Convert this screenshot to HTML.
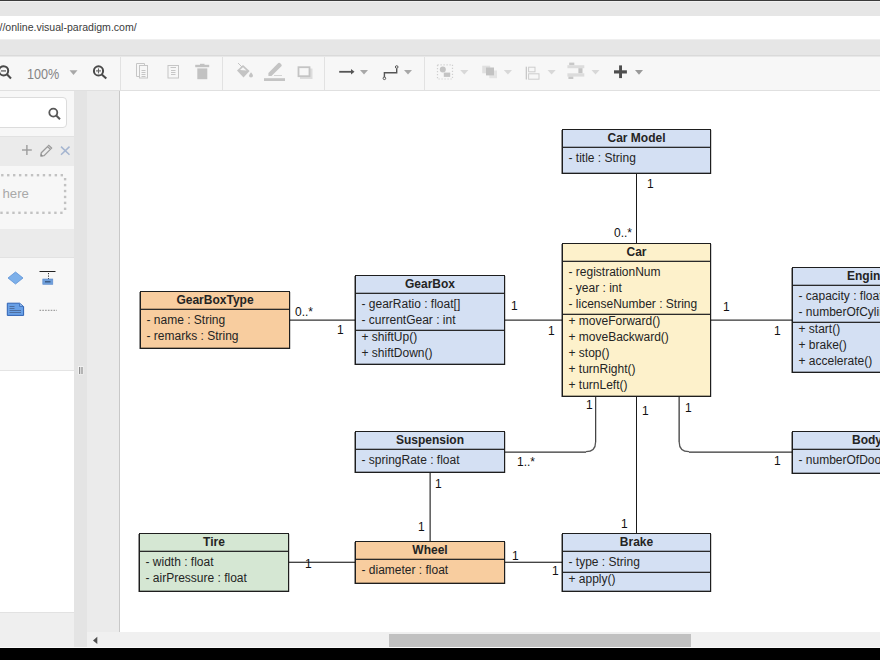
<!DOCTYPE html>
<html><head><meta charset="utf-8">
<style>
html,body{margin:0;padding:0;}
body{width:880px;height:660px;overflow:hidden;position:relative;background:#fff;font-family:"Liberation Sans",sans-serif;}
.a{position:absolute;}
</style></head><body>
<div class="a" style="left:0;top:0;width:880px;height:1px;background:#3a3a3a"></div>
<div class="a" style="left:0;top:1px;width:880px;height:1px;background:#f0f0f0"></div>
<div class="a" style="left:0;top:2px;width:880px;height:14px;background:#e6e6e6"></div>
<div class="a" style="left:0;top:16px;width:880px;height:23px;background:#fff"></div>
<div class="a" style="left:-0.5px;top:19px;font-size:10.55px;line-height:16px;color:#3c3c3c;white-space:nowrap">//online.visual-paradigm.com/</div>
<div class="a" style="left:0;top:39px;width:880px;height:1px;background:#efefef"></div>
<div class="a" style="left:0;top:40px;width:880px;height:15px;background:#e6e6e6"></div>
<div class="a" style="left:0;top:55px;width:880px;height:1px;background:#dadada"></div>
<div class="a" style="left:0;top:56px;width:880px;height:1px;background:#e8e8e8"></div>
<div class="a" style="left:0;top:57px;width:880px;height:33px;background:#f7f7f7"></div>
<div class="a" style="left:0;top:90px;width:880px;height:1px;background:#e0e0e0"></div>
<div class="a" style="left:27px;top:65.5px;font-size:14.5px;line-height:16px;color:#858585;white-space:nowrap;transform:scaleX(0.87);transform-origin:0 0">100%</div>
<svg class="a" style="left:0;top:57px" width="880" height="34" viewBox="0 57 880 34">
 <g fill="none" stroke="#e2e2e2" stroke-width="1">
  <line x1="120.5" y1="57" x2="120.5" y2="90"/><line x1="222.5" y1="57" x2="222.5" y2="90"/>
  <line x1="324.5" y1="57" x2="324.5" y2="90"/><line x1="424.5" y1="57" x2="424.5" y2="90"/>
 </g>
 <!-- zoom out -->
 <g fill="none" stroke="#4a4a4a" stroke-width="1.8">
  <circle cx="3.6" cy="70.8" r="4.6" stroke-width="2"/><line x1="6.9" y1="74.2" x2="11" y2="78.5" stroke-width="2"/>
  <line x1="1" y1="70.9" x2="6" y2="70.9" stroke-width="1.8" stroke="#8a8a8a"/>
  <circle cx="98.5" cy="70.9" r="4.6" stroke-width="2"/><line x1="101.8" y1="74.4" x2="106.3" y2="78.6" stroke-width="2"/>
  <line x1="96" y1="70.9" x2="101" y2="70.9" stroke-width="1.1" stroke="#666"/><line x1="98.5" y1="68.4" x2="98.5" y2="73.4" stroke-width="1.1" stroke="#666"/>
 </g>
 <path d="M69.5 70.3 H77.5 L73.5 75 Z" fill="#a8a8a8"/>
 <!-- copy -->
 <g fill="none" stroke="#c6c6c6" stroke-width="1">
  <path d="M139.5 76.5 H136.5 V63.5 H144.5 V65.5"/>
  <rect x="139.5" y="65.5" width="8" height="12.5"/>
  <path d="M141.5 70.5 H145.5 M141.5 72.5 H145.5 M141.5 74.5 H145.5 M141.5 76.5 H145.5"/>
  <rect x="168" y="65.5" width="10.5" height="12.5"/>
  <path d="M170.5 67.5 H176 M171 70.5 H175.5 M171 72.5 H175.5 M171 74.5 H175.5"/>
 </g>
 <g fill="#c2c2c2">
  <rect x="195.2" y="64.8" width="14" height="2.4"/><rect x="200" y="63.8" width="4.5" height="1.5"/>
  <rect x="197.3" y="68.4" width="10" height="10.8"/>
 </g>
 <!-- fill bucket -->
 <g fill="#c4c4c4">
  <path d="M237 70.5 L243 65 L249.6 71 L243.5 77.4 Z"/>
  <path d="M251 72.3 Q253.2 75 253 75.5 A2 2 0 0 1 249 75.5 Q249 75 251 72.3Z"/>
 </g>
 <path d="M238 63 L244 69" stroke="#c4c4c4" stroke-width="1"/>
 <path d="M240 70 L243 67.3 L246.5 70.5 Z" fill="#f7f7f7"/>
 <!-- pencil -->
 <path d="M268.4 73 L278.3 63.1 A1.2 1.2 0 0 1 280 63.1 L281.4 64.5 A1.2 1.2 0 0 1 281.4 66.2 L271.5 76 L268.4 76 Z" fill="#c4c4c4"/>
 <rect x="274" y="75" width="8" height="1" fill="#d4d4d4"/>
 <rect x="264" y="78.2" width="21" height="2.8" fill="#c4c4c4"/>
 <!-- shadow box -->
 <rect x="300" y="68.5" width="12.5" height="10.5" fill="#dddddd"/>
 <rect x="298.5" y="67.2" width="11" height="9" fill="#f7f7f7" stroke="#c4c4c4" stroke-width="1.8"/>
 <!-- arrow -->
 <path d="M339.2 71.8 H351.5" stroke="#555" stroke-width="1.8"/>
 <path d="M351 69 L354.5 71.8 L351 74.6 Z" fill="#555"/>
 <path d="M360 70 H368 L364 74.6 Z" fill="#a8a8a8"/>
 <!-- connector -->
 <path d="M384.4 77.2 V72.8 H396.7 V68.5" fill="none" stroke="#555" stroke-width="1.4"/>
 <circle cx="384.4" cy="78.3" r="1.3" fill="none" stroke="#555" stroke-width="1"/>
 <circle cx="396.7" cy="67" r="1.3" fill="none" stroke="#555" stroke-width="1"/>
 <path d="M404 70 H412 L408 74.6 Z" fill="#a8a8a8"/>
 <!-- group -->
 <rect x="437.5" y="64.8" width="15" height="14.2" fill="none" stroke="#d0d0d0" stroke-width="1.2" stroke-dasharray="1.2 1.8"/>
 <circle cx="442.8" cy="69.6" r="3" fill="#c4c4c4"/>
 <rect x="443.8" y="72.6" width="6.4" height="4.3" fill="#c4c4c4"/>
 <path d="M460.2 70 H468.4 L464.3 74.6 Z" fill="#d8d8d8"/>
 <!-- front/back -->
 <rect x="482.2" y="65.7" width="8" height="7.6" fill="#e0e0e0"/>
 <rect x="489.3" y="70.5" width="7.7" height="7.7" fill="#e4e4e4"/>
 <rect x="486" y="67.5" width="8" height="7.9" fill="#c2c2c2"/>
 <path d="M503.8 70 H512 L507.9 74.6 Z" fill="#d8d8d8"/>
 <!-- align -->
 <rect x="525.7" y="66.7" width="1.3" height="12.8" fill="#c8c8c8"/>
 <rect x="528.6" y="67.2" width="6.4" height="4.6" fill="none" stroke="#cdcdcd" stroke-width="1"/>
 <rect x="528.6" y="73.8" width="10.4" height="5.4" fill="none" stroke="#cdcdcd" stroke-width="1"/>
 <path d="M547.5 70 H555.7 L551.6 74.6 Z" fill="#d8d8d8"/>
 <!-- distribute -->
 <rect x="569.2" y="62.6" width="5.1" height="2.6" fill="#c8c8c8"/>
 <rect x="567.4" y="65.2" width="16.9" height="3" fill="#dcdcdc"/>
 <rect x="578.4" y="68.2" width="4.1" height="5.1" fill="#c4c4c4"/>
 <rect x="567.4" y="73.3" width="16.9" height="3.3" fill="#dcdcdc"/>
 <rect x="568.4" y="76.6" width="4.9" height="2.4" fill="#c8c8c8"/>
 <path d="M591.5 70 H599.5 L595.5 74.6 Z" fill="#d8d8d8"/>
 <!-- plus -->
 <rect x="614" y="70.3" width="12.9" height="3.2" fill="#4e4e4e"/>
 <rect x="619.1" y="65.4" width="2.9" height="12.7" fill="#4e4e4e"/>
 <path d="M635 70.1 H643 L639 74.7 Z" fill="#9a9a9a"/>
</svg>

<!-- left sidebar -->
<div class="a" style="left:0;top:91px;width:74px;height:45px;background:#f7f7f7"></div>
<div class="a" style="left:-10px;top:97px;width:75px;height:29px;background:#fff;border:1px solid #dcdcdc;border-radius:4px"></div>
<div class="a" style="left:0;top:136px;width:74px;height:30px;background:#ebebeb;border-top:1px solid #e2e2e2;box-sizing:border-box"></div>
<div class="a" style="left:0;top:166px;width:74px;height:63px;background:#f7f7f7"></div>
<div class="a" style="left:0;top:229px;width:74px;height:29px;background:#ebebeb"></div>
<div class="a" style="left:0;top:257px;width:74px;height:1px;background:#e2e2e2"></div>
<div class="a" style="left:0;top:258px;width:74px;height:112px;background:#f7f7f7"></div>
<div class="a" style="left:0;top:370px;width:74px;height:1px;background:#e4e4e4"></div>
<div class="a" style="left:0;top:371px;width:74px;height:241px;background:#fff"></div>
<div class="a" style="left:0;top:612px;width:74px;height:1px;background:#e2e2e2"></div>
<div class="a" style="left:0;top:613px;width:74px;height:34px;background:#efefef"></div>
<div class="a" style="left:74px;top:91px;width:13px;height:556px;background:#e4e4e4"></div>
<div class="a" style="left:87px;top:91px;width:32px;height:541px;background:#ebebeb"></div>
<div class="a" style="left:119px;top:91px;width:1px;height:541px;background:#c8c8c8"></div>
<div class="a" style="left:2.5px;top:186px;font-size:13.2px;line-height:16px;color:#a9a9a9;white-space:nowrap">here</div>
<svg class="a" style="left:0;top:91px" width="120" height="560" viewBox="0 91 120 560">
 <g fill="none" stroke="#585858" stroke-width="1.8">
  <circle cx="53.3" cy="112.6" r="4"/><line x1="56.2" y1="115.5" x2="60" y2="119.3" stroke-width="2"/>
 </g>
 <g stroke="#9c9c9c" stroke-width="1.4" fill="none">
  <line x1="22" y1="150" x2="31.8" y2="150"/><line x1="26.9" y1="145" x2="26.9" y2="155"/>
 </g>
 <path d="M41.3 152.8 L48.8 145.3 L51.6 148.1 L44.1 155.6 L41 155.8 Z M47.6 146.6 L50.3 149.3" fill="none" stroke="#9a9a9a" stroke-width="1.3"/><path d="M40.6 153.6 L43.2 156.2 L40.6 156.4 Z" fill="#8a8a8a"/>
 <g stroke="#a5b5d0" stroke-width="1.5"><line x1="61" y1="146.6" x2="69.5" y2="154.8"/><line x1="69.5" y1="146.6" x2="61" y2="154.8"/></g>
 <g fill="#c2c2c2"><rect x="1.10" y="174.00" width="2.4" height="2.4"/><rect x="0.30" y="211.60" width="2.4" height="2.4"/><rect x="7.05" y="174.00" width="2.4" height="2.4"/><rect x="6.29" y="211.60" width="2.4" height="2.4"/><rect x="13.00" y="174.00" width="2.4" height="2.4"/><rect x="12.28" y="211.60" width="2.4" height="2.4"/><rect x="18.95" y="174.00" width="2.4" height="2.4"/><rect x="18.27" y="211.60" width="2.4" height="2.4"/><rect x="24.90" y="174.00" width="2.4" height="2.4"/><rect x="24.26" y="211.60" width="2.4" height="2.4"/><rect x="30.85" y="174.00" width="2.4" height="2.4"/><rect x="30.25" y="211.60" width="2.4" height="2.4"/><rect x="36.80" y="174.00" width="2.4" height="2.4"/><rect x="36.24" y="211.60" width="2.4" height="2.4"/><rect x="42.75" y="174.00" width="2.4" height="2.4"/><rect x="42.23" y="211.60" width="2.4" height="2.4"/><rect x="48.70" y="174.00" width="2.4" height="2.4"/><rect x="48.22" y="211.60" width="2.4" height="2.4"/><rect x="54.65" y="174.00" width="2.4" height="2.4"/><rect x="54.21" y="211.60" width="2.4" height="2.4"/><rect x="60.60" y="174.00" width="2.4" height="2.4"/><rect x="60.20" y="211.60" width="2.4" height="2.4"/><rect x="63.90" y="178.00" width="2.4" height="2.4"/><rect x="63.90" y="183.92" width="2.4" height="2.4"/><rect x="63.90" y="189.84" width="2.4" height="2.4"/><rect x="63.90" y="195.76" width="2.4" height="2.4"/><rect x="63.90" y="201.68" width="2.4" height="2.4"/><rect x="63.90" y="207.60" width="2.4" height="2.4"/></g>
 <!-- shapes -->
 <path d="M8 278 L15.5 272 L23 278 L15.5 284 Z" fill="#7db0ea" stroke="#5d92d6" stroke-width="0.8"/>
 <line x1="39.5" y1="271.5" x2="55.5" y2="271.5" stroke="#222" stroke-width="1"/>
 <line x1="48.5" y1="273" x2="48.5" y2="279" stroke="#333" stroke-width="1" stroke-dasharray="1.2 1.3"/>
 <rect x="42.8" y="279" width="10" height="5.3" fill="#6f9fdb" stroke="#5a8ace" stroke-width="0.6"/>
 <rect x="45" y="281" width="5.5" height="1.5" fill="#3f5f8a"/>
 <path d="M7.3 303.2 H19.6 L23.6 306.6 V315.4 H7.3 Z" fill="#69a0e6" stroke="#2f62b3" stroke-width="1"/><path d="M19.6 303.6 V306.4 H23.2" fill="#9cc2f0" stroke="#2f62b3" stroke-width="0.8"/>
 <path d="M9.5 306.5 H14.5 M9.5 308.5 H14.5 M9.5 310.5 H21 M9.5 312.5 H21" stroke="#4a6a98" stroke-width="0.9"/>
 <line x1="39.5" y1="310.3" x2="57" y2="310.3" stroke="#8a8a8a" stroke-width="1" stroke-dasharray="1.6 1.2"/>
 <!-- handle -->
 <rect x="78" y="366" width="5.5" height="8.5" fill="#f2f2f2"/>
 <rect x="79.2" y="367" width="1" height="7" fill="#777"/><rect x="81.5" y="367" width="1" height="7" fill="#777"/>
 <!-- scroll arrow -->
 <path d="M97.3 636.7 L93 640.4 L97.3 644.1 Z" fill="#505050"/>
</svg>
<!-- scrollbar -->
<div class="a" style="left:87px;top:632px;width:793px;height:15px;background:#f0f0f0"></div>
<svg class="a" style="left:87px;top:632px" width="20" height="15" viewBox="87 632 20 15"><path d="M97.3 636.7 L93 640.4 L97.3 644.1 Z" fill="#505050"/></svg>
<div class="a" style="left:389px;top:634px;width:302px;height:13px;background:#c1c1c1"></div>
<div class="a" style="left:0;top:647px;width:880px;height:1px;background:#fafafa"></div>
<div class="a" style="left:0;top:648px;width:880px;height:12px;background:#000"></div>

<svg class="a" style="left:0;top:0" width="880" height="660" viewBox="0 0 880 660" font-family="Liberation Sans" font-size="12" fill="#242424">
<rect x="636" y="173" width="1" height="70" fill="#1a1a1a"/>
<rect x="636" y="396" width="1" height="137" fill="#1a1a1a"/>
<rect x="290" y="319" width="65" height="1" fill="#9a9a9a"/><rect x="290" y="320" width="65" height="1" fill="#666"/>
<rect x="505" y="319" width="57" height="1" fill="#9a9a9a"/><rect x="505" y="320" width="57" height="1" fill="#666"/>
<rect x="711" y="319" width="81" height="1" fill="#9a9a9a"/><rect x="711" y="320" width="81" height="1" fill="#666"/>
<rect x="429" y="473" width="1" height="68" fill="#9a9a9a"/>
<rect x="430" y="473" width="1" height="68" fill="#666"/>
<rect x="289" y="561" width="66" height="1" fill="#bbb"/><rect x="289" y="562" width="66" height="1" fill="#444"/>
<rect x="505" y="561" width="57" height="1" fill="#bbb"/><rect x="505" y="562" width="57" height="1" fill="#444"/>
<rect x="596" y="397" width="1" height="45" fill="#ccc"/>
<rect x="595" y="397" width="1" height="45" fill="#444"/>
<rect x="505" y="451" width="81" height="1" fill="#9a9a9a"/><rect x="505" y="452" width="81" height="1" fill="#666"/>
<rect x="678" y="397" width="1" height="45" fill="#9a9a9a"/>
<rect x="679" y="397" width="1" height="45" fill="#666"/>
<rect x="689" y="451" width="103" height="1" fill="#9a9a9a"/><rect x="689" y="452" width="103" height="1" fill="#666"/>
<path d="M595.6 442 Q595.6 451.7 586 451.7" fill="none" stroke="#555" stroke-width="1.3"/>
<path d="M679.2 442 Q679.2 451.7 689 451.7" fill="none" stroke="#555" stroke-width="1.3"/>
<rect x="562" y="129" width="149" height="45" fill="#d4e0f3"/>
<rect x="561" y="130" width="1" height="44" fill="rgba(0,0,0,0.42)"/>
<rect x="711" y="130" width="1" height="44" fill="rgba(0,0,0,0.18)"/>
<rect x="562" y="172" width="149" height="1" fill="rgba(0,0,0,0.3)"/>
<rect x="562" y="146" width="149" height="1" fill="rgba(0,0,0,0.25)"/>
<rect x="562" y="147" width="149" height="1" fill="#2a2a2a"/>
<rect x="562" y="129" width="149" height="1" fill="#1e1e1e"/>
<rect x="562" y="173" width="149" height="1" fill="#1e1e1e"/>
<rect x="562" y="129" width="1" height="45" fill="#1e1e1e"/>
<rect x="710" y="129" width="1" height="45" fill="#1e1e1e"/>
<text x="636.5" y="142" text-anchor="middle" font-weight="bold">Car Model</text>
<text x="568.5" y="162">- title : String</text>
<rect x="562" y="243" width="149" height="154" fill="#fdf1cb"/>
<rect x="561" y="244" width="1" height="153" fill="rgba(0,0,0,0.42)"/>
<rect x="711" y="244" width="1" height="153" fill="rgba(0,0,0,0.18)"/>
<rect x="562" y="395" width="149" height="1" fill="rgba(0,0,0,0.3)"/>
<rect x="562" y="260" width="149" height="1" fill="rgba(0,0,0,0.25)"/>
<rect x="562" y="261" width="149" height="1" fill="#2a2a2a"/>
<rect x="562" y="313" width="149" height="1" fill="rgba(0,0,0,0.25)"/>
<rect x="562" y="314" width="149" height="1" fill="#2a2a2a"/>
<rect x="562" y="243" width="149" height="1" fill="#1e1e1e"/>
<rect x="562" y="396" width="149" height="1" fill="#1e1e1e"/>
<rect x="562" y="243" width="1" height="154" fill="#1e1e1e"/>
<rect x="710" y="243" width="1" height="154" fill="#1e1e1e"/>
<text x="636.5" y="256" text-anchor="middle" font-weight="bold">Car</text>
<text x="568.5" y="276">- registrationNum</text>
<text x="568.5" y="292">- year : int</text>
<text x="568.5" y="308">- licenseNumber : String</text>
<text x="568.5" y="325">+ moveForward()</text>
<text x="568.5" y="341">+ moveBackward()</text>
<text x="568.5" y="357">+ stop()</text>
<text x="568.5" y="373">+ turnRight()</text>
<text x="568.5" y="389">+ turnLeft()</text>
<rect x="140" y="291" width="150" height="58" fill="#f8cd9f"/>
<rect x="139" y="292" width="1" height="57" fill="rgba(0,0,0,0.42)"/>
<rect x="290" y="292" width="1" height="57" fill="rgba(0,0,0,0.18)"/>
<rect x="140" y="347" width="150" height="1" fill="rgba(0,0,0,0.3)"/>
<rect x="140" y="308" width="150" height="1" fill="rgba(0,0,0,0.25)"/>
<rect x="140" y="309" width="150" height="1" fill="#2a2a2a"/>
<rect x="140" y="291" width="150" height="1" fill="#1e1e1e"/>
<rect x="140" y="348" width="150" height="1" fill="#1e1e1e"/>
<rect x="140" y="291" width="1" height="58" fill="#1e1e1e"/>
<rect x="289" y="291" width="1" height="58" fill="#1e1e1e"/>
<text x="215.0" y="304" text-anchor="middle" font-weight="bold">GearBoxType</text>
<text x="146.5" y="324">- name : String</text>
<text x="146.5" y="340">- remarks : String</text>
<rect x="355" y="275" width="150" height="90" fill="#d4e0f3"/>
<rect x="354" y="276" width="1" height="89" fill="rgba(0,0,0,0.42)"/>
<rect x="505" y="276" width="1" height="89" fill="rgba(0,0,0,0.18)"/>
<rect x="355" y="363" width="150" height="1" fill="rgba(0,0,0,0.3)"/>
<rect x="355" y="292" width="150" height="1" fill="rgba(0,0,0,0.25)"/>
<rect x="355" y="293" width="150" height="1" fill="#2a2a2a"/>
<rect x="355" y="329" width="150" height="1" fill="rgba(0,0,0,0.25)"/>
<rect x="355" y="330" width="150" height="1" fill="#2a2a2a"/>
<rect x="355" y="275" width="150" height="1" fill="#1e1e1e"/>
<rect x="355" y="364" width="150" height="1" fill="#1e1e1e"/>
<rect x="355" y="275" width="1" height="90" fill="#1e1e1e"/>
<rect x="504" y="275" width="1" height="90" fill="#1e1e1e"/>
<text x="430.0" y="288" text-anchor="middle" font-weight="bold">GearBox</text>
<text x="361.5" y="308">- gearRatio : float[]</text>
<text x="361.5" y="324">- currentGear : int</text>
<text x="361.5" y="341">+ shiftUp()</text>
<text x="361.5" y="357">+ shiftDown()</text>
<rect x="792" y="267" width="150" height="106" fill="#d4e0f3"/>
<rect x="791" y="268" width="1" height="105" fill="rgba(0,0,0,0.42)"/>
<rect x="942" y="268" width="1" height="105" fill="rgba(0,0,0,0.18)"/>
<rect x="792" y="371" width="150" height="1" fill="rgba(0,0,0,0.3)"/>
<rect x="792" y="284" width="150" height="1" fill="rgba(0,0,0,0.25)"/>
<rect x="792" y="285" width="150" height="1" fill="#2a2a2a"/>
<rect x="792" y="321" width="150" height="1" fill="rgba(0,0,0,0.25)"/>
<rect x="792" y="322" width="150" height="1" fill="#2a2a2a"/>
<rect x="792" y="267" width="150" height="1" fill="#1e1e1e"/>
<rect x="792" y="372" width="150" height="1" fill="#1e1e1e"/>
<rect x="792" y="267" width="1" height="106" fill="#1e1e1e"/>
<rect x="941" y="267" width="1" height="106" fill="#1e1e1e"/>
<text x="867.0" y="280" text-anchor="middle" font-weight="bold">Engine</text>
<text x="798.5" y="300">- capacity : float</text>
<text x="798.5" y="316">- numberOfCylinders</text>
<text x="798.5" y="333">+ start()</text>
<text x="798.5" y="349">+ brake()</text>
<text x="798.5" y="365">+ accelerate()</text>
<rect x="355" y="431" width="150" height="42" fill="#d4e0f3"/>
<rect x="354" y="432" width="1" height="41" fill="rgba(0,0,0,0.42)"/>
<rect x="505" y="432" width="1" height="41" fill="rgba(0,0,0,0.18)"/>
<rect x="355" y="471" width="150" height="1" fill="rgba(0,0,0,0.3)"/>
<rect x="355" y="448" width="150" height="1" fill="rgba(0,0,0,0.25)"/>
<rect x="355" y="449" width="150" height="1" fill="#2a2a2a"/>
<rect x="355" y="431" width="150" height="1" fill="#1e1e1e"/>
<rect x="355" y="472" width="150" height="1" fill="#1e1e1e"/>
<rect x="355" y="431" width="1" height="42" fill="#1e1e1e"/>
<rect x="504" y="431" width="1" height="42" fill="#1e1e1e"/>
<text x="430.0" y="444" text-anchor="middle" font-weight="bold">Suspension</text>
<text x="361.5" y="464">- springRate : float</text>
<rect x="792" y="431" width="150" height="43" fill="#d4e0f3"/>
<rect x="791" y="432" width="1" height="42" fill="rgba(0,0,0,0.42)"/>
<rect x="942" y="432" width="1" height="42" fill="rgba(0,0,0,0.18)"/>
<rect x="792" y="472" width="150" height="1" fill="rgba(0,0,0,0.3)"/>
<rect x="792" y="448" width="150" height="1" fill="rgba(0,0,0,0.25)"/>
<rect x="792" y="449" width="150" height="1" fill="#2a2a2a"/>
<rect x="792" y="431" width="150" height="1" fill="#1e1e1e"/>
<rect x="792" y="473" width="150" height="1" fill="#1e1e1e"/>
<rect x="792" y="431" width="1" height="43" fill="#1e1e1e"/>
<rect x="941" y="431" width="1" height="43" fill="#1e1e1e"/>
<text x="867.0" y="444" text-anchor="middle" font-weight="bold">Body</text>
<text x="798.5" y="464">- numberOfDoors</text>
<rect x="139" y="533" width="150" height="59" fill="#d5e7d3"/>
<rect x="138" y="534" width="1" height="58" fill="rgba(0,0,0,0.42)"/>
<rect x="289" y="534" width="1" height="58" fill="rgba(0,0,0,0.18)"/>
<rect x="139" y="590" width="150" height="1" fill="rgba(0,0,0,0.3)"/>
<rect x="139" y="550" width="150" height="1" fill="rgba(0,0,0,0.25)"/>
<rect x="139" y="551" width="150" height="1" fill="#2a2a2a"/>
<rect x="139" y="533" width="150" height="1" fill="#1e1e1e"/>
<rect x="139" y="591" width="150" height="1" fill="#1e1e1e"/>
<rect x="139" y="533" width="1" height="59" fill="#1e1e1e"/>
<rect x="288" y="533" width="1" height="59" fill="#1e1e1e"/>
<text x="214.0" y="546" text-anchor="middle" font-weight="bold">Tire</text>
<text x="145.5" y="566">- width : float</text>
<text x="145.5" y="582">- airPressure : float</text>
<rect x="355" y="541" width="150" height="43" fill="#f8cd9f"/>
<rect x="354" y="542" width="1" height="42" fill="rgba(0,0,0,0.42)"/>
<rect x="505" y="542" width="1" height="42" fill="rgba(0,0,0,0.18)"/>
<rect x="355" y="582" width="150" height="1" fill="rgba(0,0,0,0.3)"/>
<rect x="355" y="558" width="150" height="1" fill="rgba(0,0,0,0.25)"/>
<rect x="355" y="559" width="150" height="1" fill="#2a2a2a"/>
<rect x="355" y="541" width="150" height="1" fill="#1e1e1e"/>
<rect x="355" y="583" width="150" height="1" fill="#1e1e1e"/>
<rect x="355" y="541" width="1" height="43" fill="#1e1e1e"/>
<rect x="504" y="541" width="1" height="43" fill="#1e1e1e"/>
<text x="430.0" y="554" text-anchor="middle" font-weight="bold">Wheel</text>
<text x="361.5" y="574">- diameter : float</text>
<rect x="562" y="533" width="149" height="59" fill="#d4e0f3"/>
<rect x="561" y="534" width="1" height="58" fill="rgba(0,0,0,0.42)"/>
<rect x="711" y="534" width="1" height="58" fill="rgba(0,0,0,0.18)"/>
<rect x="562" y="590" width="149" height="1" fill="rgba(0,0,0,0.3)"/>
<rect x="562" y="550" width="149" height="1" fill="rgba(0,0,0,0.25)"/>
<rect x="562" y="551" width="149" height="1" fill="#2a2a2a"/>
<rect x="562" y="571" width="149" height="1" fill="rgba(0,0,0,0.25)"/>
<rect x="562" y="572" width="149" height="1" fill="#2a2a2a"/>
<rect x="562" y="533" width="149" height="1" fill="#1e1e1e"/>
<rect x="562" y="591" width="149" height="1" fill="#1e1e1e"/>
<rect x="562" y="533" width="1" height="59" fill="#1e1e1e"/>
<rect x="710" y="533" width="1" height="59" fill="#1e1e1e"/>
<text x="636.5" y="546" text-anchor="middle" font-weight="bold">Brake</text>
<text x="568.5" y="566">- type : String</text>
<text x="568.5" y="583">+ apply()</text>
<text x="647" y="188" fill="#111">1</text>
<text x="614" y="237" fill="#111">0..*</text>
<text x="295" y="316" fill="#111">0..*</text>
<text x="337" y="334" fill="#111">1</text>
<text x="511" y="310" fill="#111">1</text>
<text x="548" y="335" fill="#111">1</text>
<text x="723" y="311" fill="#111">1</text>
<text x="774" y="335" fill="#111">1</text>
<text x="586" y="409" fill="#111">1</text>
<text x="517" y="466" fill="#111">1..*</text>
<text x="642" y="415" fill="#111">1</text>
<text x="621" y="528" fill="#111">1</text>
<text x="685" y="412" fill="#111">1</text>
<text x="774" y="465" fill="#111">1</text>
<text x="435" y="488" fill="#111">1</text>
<text x="418" y="531" fill="#111">1</text>
<text x="305" y="568" fill="#111">1</text>
<text x="512" y="560" fill="#111">1</text>
<text x="552" y="575" fill="#111">1</text>
</svg>
</body></html>
